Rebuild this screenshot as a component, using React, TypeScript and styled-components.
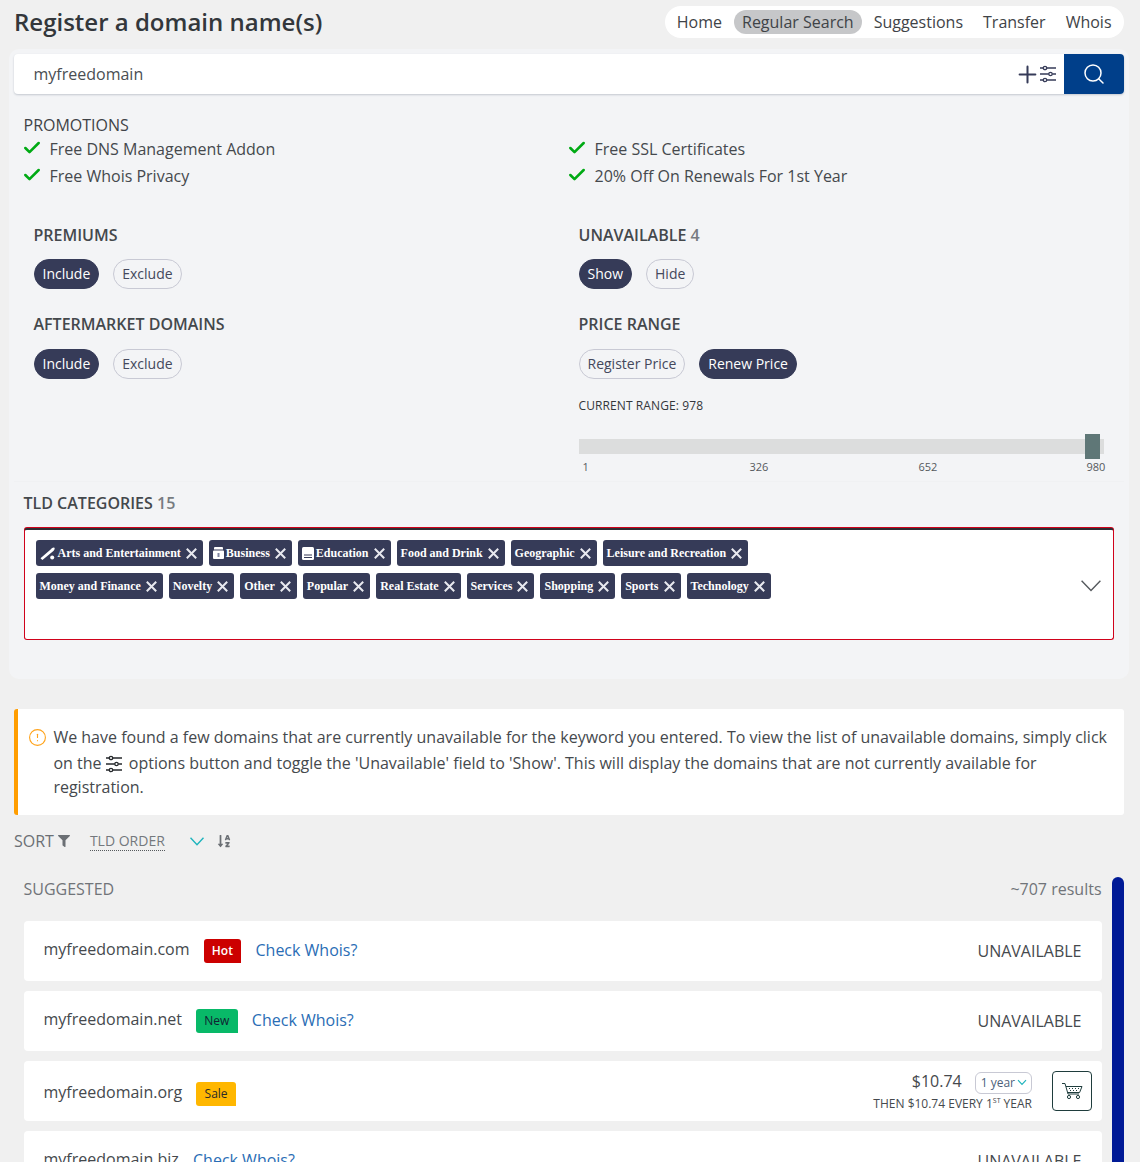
import React from 'react';
import styled, { createGlobalStyle } from 'styled-components';
import { Check, CircleAlert, Plus, Search } from 'lucide-react';
import { FaFilter, FaSortAlphaDown } from 'react-icons/fa';

const GlobalStyle = createGlobalStyle`
  html, body {
    margin: 0;
    padding: 0;
    background: #f0f0f0;
  }
  body {
    font-family: "Open Sans", "Liberation Sans", sans-serif;
    color: #3a3f44;
  }
  * {
    box-sizing: border-box;
  }
`;

const Page = styled.div`
  width: 1140px;
  height: 1162px;
  overflow: hidden;
  padding: 6px 16px 0 14px;
`;

const Header = styled.header`
  display: flex;
  justify-content: space-between;
  align-items: center;
  height: 32px;
`;

const Title = styled.h1`
  margin: 0;
  font-size: 24px;
  line-height: 32px;
  font-weight: 600;
  color: #33373b;
`;

const Nav = styled.nav`
  display: flex;
  align-items: center;
  gap: 4px;
  height: 32px;
  padding: 0 4.5px 0 4px;
  background: #fff;
  border-radius: 16px;
`;

const NavItem = styled.a<{ $active?: boolean }>`
  padding: 0 8px;
  height: 24px;
  line-height: 24px;
  font-size: 16px;
  border-radius: 12px;
  color: #3f4347;
  background: ${(p) => (p.$active ? '#c6c7c9' : 'transparent')};
`;

const Panel = styled.section`
  margin: 11px -5px 0;
  height: 630px;
  padding: 5px 5px 0;
  background: #f3f4f6;
  border-radius: 10px;
`;

const SearchBar = styled.div`
  display: flex;
  align-items: center;
  height: 40px;
  background: #fff;
  border-radius: 4px;
  box-shadow: 0 1px 2px rgba(60, 70, 100, 0.25);
`;

const SearchInput = styled.div`
  flex: 1;
  padding-left: 19.5px;
  font-size: 16px;
  color: #4a4e52;
`;

const SearchTools = styled.div`
  display: flex;
  align-items: center;
  padding-right: 7px;
  color: #363b58;

  svg + svg {
    margin-left: -1.5px;
  }
`;

const SearchButton = styled.button`
  display: flex;
  align-items: center;
  justify-content: center;
  width: 60px;
  height: 40px;
  border: 0;
  border-radius: 0 4px 4px 0;
  background: #003f8a;
  color: #fff;
`;

const Promotions = styled.div`
  padding: 20px 10px 0 9.5px;
`;

const PromoTitle = styled.div`
  margin-bottom: 2px;
  font-size: 16px;
  line-height: 22px;
  color: #3f4347;
`;

const PromoGrid = styled.div`
  display: grid;
  grid-template-columns: 545px 1fr;
  row-gap: 5px;
`;

const PromoItem = styled.div`
  display: flex;
  align-items: center;
  gap: 7.5px;
  height: 22px;
  font-size: 16px;
  color: #45494d;

  svg {
    color: #00aa14;
    margin: -3px 0 0 -1.5px;
  }
`;

const Options = styled.div`
  display: grid;
  grid-template-columns: 545px 1fr;
  padding: 37px 10px 0 19.5px;
`;

const OptionGroup = styled.div`
  height: 89px;
`;

const OptionTitle = styled.div`
  font-size: 16px;
  line-height: 22px;
  font-weight: 600;
  color: #44484c;

  span {
    color: #777b80;
  }
`;

const PillRow = styled.div<{ $wide?: boolean }>`
  display: flex;
  gap: 14px;
  margin-top: ${(p) => (p.$wide ? '14px' : '13px')};
`;

const Pill = styled.div<{ $on?: boolean }>`
  height: 30px;
  line-height: 28px;
  padding: 0 8px;
  font-size: 14px;
  border-radius: 15px;
  border: 1px solid ${(p) => (p.$on ? '#363b58' : '#c8c9d4')};
  background: ${(p) => (p.$on ? '#363b58' : 'transparent')};
  color: ${(p) => (p.$on ? '#fff' : '#44485c')};
  font-weight: ${(p) => (p.$on ? 500 : 400)};
`;

const RangeLabel = styled.div`
  margin-top: 19px;
  font-size: 12px;
  line-height: 16px;
  letter-spacing: 0.1px;
  color: #33373b;
`;

const RangeTrack = styled.div`
  position: relative;
  width: 525px;
  height: 15px;
  margin-top: 25px;
  background: #dcdddd;
`;

const RangeThumb = styled.div`
  position: absolute;
  top: -5px;
  right: 4px;
  width: 15px;
  height: 25px;
  background: #5f7777;
`;

const RangeScale = styled.div`
  display: grid;
  grid-template-columns: 167px 169px 168px auto;
  margin-top: 6px;
  padding-left: 4px;
  font-size: 11px;
  line-height: 14px;
  color: #55595d;
`;

const Categories = styled.div`
  margin-top: 7px;
  padding: 10px 10px 0 9.5px;
  border-top: 1px solid #f0f1f3;
`;

const CategoryBox = styled.div`
  position: relative;
  margin-top: 14px;
  height: 112px;
  padding: 10px 11px 0;
  background: #fff;
  border: 1px solid #d0021b;
  border-top: 2px solid #2d2d33;
  box-shadow: 0 -1px 0 #d0021b;
  border-radius: 3px;
`;

const ChipWrap = styled.div`
  display: flex;
  flex-wrap: wrap;
  gap: 7px 6px;
  width: 800px;
`;

const Chip = styled.div`
  display: flex;
  align-items: center;
  gap: 2px;
  height: 26px;
  padding: 0 6px 0 4px;
  background: #363b58;
  border-radius: 3px;
  color: #fff;
  font-family: "Liberation Serif", serif;
  font-size: 12px;
  font-weight: 700;
`;

const ChipClose = styled.svg`
  margin-left: 3px;
  color: #e8e9ef;
`;

const BoxChevron = styled.svg`
  position: absolute;
  right: 12px;
  top: 50px;
  color: #55595d;
`;

const Notice = styled.div`
  display: flex;
  gap: 6px;
  margin-top: 30px;
  width: 1110px;
  height: 106px;
  padding: 16px 12px 0 10.4px;
  background: #fff;
  border-left: 4px solid #ff9d00;
  border-radius: 3px;
  font-size: 16px;
  line-height: 24px;
  color: #45494d;

  > svg {
    flex: none;
    color: #ffa31a;
    margin-top: 2.5px;
  }
`;

const InlineSliders = styled.span`
  display: inline-block;
  padding-top: 6px;
  vertical-align: -4px;
  margin: 0 2px 0 -1px;
  color: #26292c;
  line-height: 0;
`;

const SortRow = styled.div`
  display: flex;
  align-items: center;
  height: 26px;
  margin-top: 13px;
  color: #6b6f74;
`;

const SortLabel = styled.span`
  font-size: 16px;
`;

const SortField = styled.span`
  margin-left: 20px;
  width: 99px;
  font-size: 14px;
  line-height: 18px;
  color: #74787d;

  span {
    border-bottom: 1px dotted #55595d;
  }
`;

const SortChevron = styled.svg`
  margin: 0 13px 0 1px;
  color: #1eb4bd;
`;

const Results = styled.div`
  display: flex;
  align-items: flex-start;
  gap: 10px;
  margin-top: 23px;
`;

const ResultList = styled.div`
  flex: 1;
  padding: 0 0 0 10px;
`;

const ResultHead = styled.div`
  display: flex;
  justify-content: space-between;
  align-items: center;
  height: 24px;
  margin: 0 0.5px 20px -0.5px;
  font-size: 16px;
  color: #707479;
`;

const ScrollThumb = styled.div`
  flex: none;
  width: 12px;
  height: 320px;
  background: #001a96;
  border-radius: 6px;
`;

const Row = styled.div`
  display: flex;
  align-items: center;
  height: 60px;
  margin-bottom: 10px;
  padding: 0 10px 0 19.5px;
  background: #fff;
  border-radius: 4px;
`;

const DomainName = styled.span<{ $low?: boolean }>`
  font-size: 16px;
  color: #45494d;
  margin-top: ${(p) => (p.$low ? '2px' : '-4px')};
`;

const Badge = styled.span<{ $bg: string; $fg: string; $bold?: boolean; $low?: boolean }>`
  height: 24px;
  line-height: 24px;
  margin-left: 14px;
  margin-top: ${(p) => (p.$low ? '5px' : '0')};
  padding: 0 8.3px;
  font-size: 12px;
  border-radius: 3px 3px 0 3px;
  background: ${(p) => p.$bg};
  color: ${(p) => p.$fg};
  font-weight: ${(p) => (p.$bold ? 600 : 500)};
`;

const WhoisLink = styled.a`
  margin: -2px 0 0 14.3px;
  font-size: 16px;
  color: #2a6db5;
`;

const Status = styled.span`
  margin-left: auto;
  padding-right: 10.5px;
  font-size: 16px;
  color: #45494d;
`;

const PriceBlock = styled.div`
  margin-left: auto;
  text-align: right;
`;

const PriceLine = styled.div`
  display: flex;
  justify-content: flex-end;
  align-items: center;
  gap: 13px;
  font-size: 16px;
  line-height: 22px;
  color: #45494d;
`;

const PriceValue = styled.span`
  margin-top: -4px;
`;

const TermSelect = styled.span`
  display: inline-flex;
  align-items: center;
  gap: 2px;
  height: 22px;
  padding: 0 4px 0 5px;
  font-size: 12px;
  color: #4c5f7a;
  border: 1px solid #c8c9d4;
  border-radius: 6px;

  svg {
    color: #1eb4bd;
  }
`;

const RenewLine = styled.div`
  margin-top: 3px;
  font-size: 12px;
  line-height: 14px;
  color: #45494d;

  sup {
    font-size: 7px;
    line-height: 0;
  }
`;

const CartButton = styled.button`
  display: flex;
  align-items: center;
  justify-content: center;
  width: 40px;
  height: 40px;
  margin-left: 20px;
  padding: 0;
  background: #fff;
  border: 1px solid #1f3d3d;
  border-radius: 4px;
  color: #1f3d3d;
`;

const SlidersIcon = () => (
  <svg width="18" height="18" viewBox="0 0 18 18" fill="none" stroke="currentColor" strokeWidth="1.3">
    <path d="M1 3h3.3M7.7 3H17M1 9h8.8M13.2 9H17M1 15h3.3M7.7 15H17" />
    <circle cx="6" cy="3" r="1.7" />
    <circle cx="11.5" cy="9" r="1.7" />
    <circle cx="6" cy="15" r="1.7" />
  </svg>
);

const BatIcon = () => (
  <svg width="16" height="14" viewBox="0 0 16 14" fill="#fff">
    <path d="M0.5 12.2 10.6 3.4c1-.9 2.8-2.3 3.8-1.6.9.8-.3 2.5-1.3 3.5L2.4 14Z" />
    <circle cx="12.2" cy="11.4" r="2" />
  </svg>
);

const BusinessIcon = () => (
  <svg width="11" height="12" viewBox="0 0 11 12" fill="#fff">
    <path d="M2 0h7a1 1 0 0 1 1 1v1.4H1V1a1 1 0 0 1 1-1Z" />
    <path d="M1 3.4h9a1 1 0 0 1 1 1V11a1 1 0 0 1-1 1H1a1 1 0 0 1-1-1V4.4a1 1 0 0 1 1-1Z" />
    <rect x="4.5" y="6" width="2" height="4" fill="#7f84a0" />
  </svg>
);

const BookIcon = () => (
  <svg width="12" height="13" viewBox="0 0 12 13" fill="#fff">
    <rect width="12" height="13" rx="1.5" />
    <rect x="2" y="7.5" width="8" height="1" fill="#363b58" />
    <rect x="2" y="10" width="8" height="1" fill="#363b58" />
  </svg>
);

const CloseIcon = () => (
  <ChipClose width="11" height="11" viewBox="0 0 11 11" fill="none" stroke="currentColor" strokeWidth="2">
    <path d="M.8.8l9.4 9.4M10.2.8.8 10.2" />
  </ChipClose>
);

const CartIcon = () => (
  <svg width="22" height="18" viewBox="0 0 22 18" fill="none" stroke="currentColor" strokeWidth="1">
    <path d="M1 1.5h3l3 10.5h11" />
    <path d="M5 4.5h16l-2.4 6H6.8" />
    <path d="M8 6.5h1M11 6.5h1M14 6.5h1M17 6.5h1M9 8.5h1M12 8.5h1M15 8.5h1" strokeWidth="1.2" />
    <circle cx="8" cy="15" r="1.6" />
    <circle cx="17" cy="15" r="1.6" />
  </svg>
);

type Category = { name: string; icon?: React.ReactNode };

const categories: Category[] = [
  { name: 'Arts and Entertainment', icon: <BatIcon /> },
  { name: 'Business', icon: <BusinessIcon /> },
  { name: 'Education', icon: <BookIcon /> },
  { name: 'Food and Drink' },
  { name: 'Geographic' },
  { name: 'Leisure and Recreation' },
  { name: 'Money and Finance' },
  { name: 'Novelty' },
  { name: 'Other' },
  { name: 'Popular' },
  { name: 'Real Estate' },
  { name: 'Services' },
  { name: 'Shopping' },
  { name: 'Sports' },
  { name: 'Technology' },
];

const App: React.FC = () => {
  return (
    <Page>
      <GlobalStyle />
      <Header>
        <Title>Register a domain name(s)</Title>
        <Nav>
          <NavItem>Home</NavItem>
          <NavItem $active>Regular Search</NavItem>
          <NavItem>Suggestions</NavItem>
          <NavItem>Transfer</NavItem>
          <NavItem>Whois</NavItem>
        </Nav>
      </Header>

      <Panel>
        <SearchBar>
          <SearchInput>myfreedomain</SearchInput>
          <SearchTools>
            <Plus size={27} strokeWidth={1.8} />
            <SlidersIcon />
          </SearchTools>
          <SearchButton>
            <Search size={24} strokeWidth={1.5} />
          </SearchButton>
        </SearchBar>

        <Promotions>
          <PromoTitle>PROMOTIONS</PromoTitle>
          <PromoGrid>
            <PromoItem><Check size={20} strokeWidth={3.1} />Free DNS Management Addon</PromoItem>
            <PromoItem><Check size={20} strokeWidth={3.1} />Free SSL Certificates</PromoItem>
            <PromoItem><Check size={20} strokeWidth={3.1} />Free Whois Privacy</PromoItem>
            <PromoItem><Check size={20} strokeWidth={3.1} />20% Off On Renewals For 1st Year</PromoItem>
          </PromoGrid>
        </Promotions>

        <Options>
          <div>
            <OptionGroup>
              <OptionTitle>PREMIUMS</OptionTitle>
              <PillRow>
                <Pill $on>Include</Pill>
                <Pill>Exclude</Pill>
              </PillRow>
            </OptionGroup>
            <OptionGroup>
              <OptionTitle>AFTERMARKET DOMAINS</OptionTitle>
              <PillRow $wide>
                <Pill $on>Include</Pill>
                <Pill>Exclude</Pill>
              </PillRow>
            </OptionGroup>
          </div>
          <div>
            <OptionGroup>
              <OptionTitle>UNAVAILABLE <span>4</span></OptionTitle>
              <PillRow>
                <Pill $on>Show</Pill>
                <Pill>Hide</Pill>
              </PillRow>
            </OptionGroup>
            <OptionTitle>PRICE RANGE</OptionTitle>
            <PillRow $wide>
              <Pill>Register Price</Pill>
              <Pill $on>Renew Price</Pill>
            </PillRow>
            <RangeLabel>CURRENT RANGE: 978</RangeLabel>
            <RangeTrack>
              <RangeThumb />
            </RangeTrack>
            <RangeScale>
              <span>1</span>
              <span>326</span>
              <span>652</span>
              <span>980</span>
            </RangeScale>
          </div>
        </Options>

        <Categories>
          <OptionTitle>TLD CATEGORIES <span>15</span></OptionTitle>
          <CategoryBox>
            <ChipWrap>
              {categories.map((c) => (
                <Chip key={c.name}>
                  {c.icon}
                  {c.name}
                  <CloseIcon />
                </Chip>
              ))}
            </ChipWrap>
            <BoxChevron width="20" height="12" viewBox="0 0 20 12" fill="none" stroke="currentColor" strokeWidth="1.4">
              <path d="M.6.8 10 10.6 19.4.8" />
            </BoxChevron>
          </CategoryBox>
        </Categories>
      </Panel>

      <Notice>
        <CircleAlert size={19} strokeWidth={1.4} />
        <div>
          We have found a few domains that are currently unavailable for the keyword you entered. To view the list of unavailable domains, simply click on the{' '}
          <InlineSliders><SlidersIcon /></InlineSliders>{' '}
          options button and toggle the 'Unavailable' field to 'Show'. This will display the domains that are not currently available for registration.
        </div>
      </Notice>

      <SortRow>
        <SortLabel>SORT</SortLabel>
        <FaFilter size={12} style={{ marginLeft: 4 }} />
        <SortField><span>TLD ORDER</span></SortField>
        <SortChevron width="14" height="9" viewBox="0 0 14 9" fill="none" stroke="currentColor" strokeWidth="1.4">
          <path d="M.5.8 7 7.8 13.5.8" />
        </SortChevron>
        <FaSortAlphaDown size={14} />
      </SortRow>

      <Results>
        <ResultList>
          <ResultHead>
            <span>SUGGESTED</span>
            <span>~707 results</span>
          </ResultHead>
          <Row>
            <DomainName>myfreedomain.com</DomainName>
            <Badge $bg="#cc0000" $fg="#fff" $bold>Hot</Badge>
            <WhoisLink>Check Whois?</WhoisLink>
            <Status>UNAVAILABLE</Status>
          </Row>
          <Row>
            <DomainName>myfreedomain.net</DomainName>
            <Badge $bg="#08b968" $fg="#123">New</Badge>
            <WhoisLink>Check Whois?</WhoisLink>
            <Status>UNAVAILABLE</Status>
          </Row>
          <Row>
            <DomainName $low>myfreedomain.org</DomainName>
            <Badge $bg="#ffb700" $fg="#2a2a2a" $low>Sale</Badge>
            <PriceBlock>
              <PriceLine>
                <PriceValue>$10.74</PriceValue>
                <TermSelect>
                  1 year
                  <svg width="10" height="7" viewBox="0 0 10 7" fill="none" stroke="currentColor" strokeWidth="1.2">
                    <path d="M1 1.2 5 5.4 9 1.2" />
                  </svg>
                </TermSelect>
              </PriceLine>
              <RenewLine>THEN $10.74 EVERY 1<sup>ST</sup> YEAR</RenewLine>
            </PriceBlock>
            <CartButton><CartIcon /></CartButton>
          </Row>
          <Row>
            <DomainName>myfreedomain.biz</DomainName>
            <WhoisLink>Check Whois?</WhoisLink>
            <Status>UNAVAILABLE</Status>
          </Row>
        </ResultList>
        <ScrollThumb />
      </Results>
    </Page>
  );
};

export default App;
